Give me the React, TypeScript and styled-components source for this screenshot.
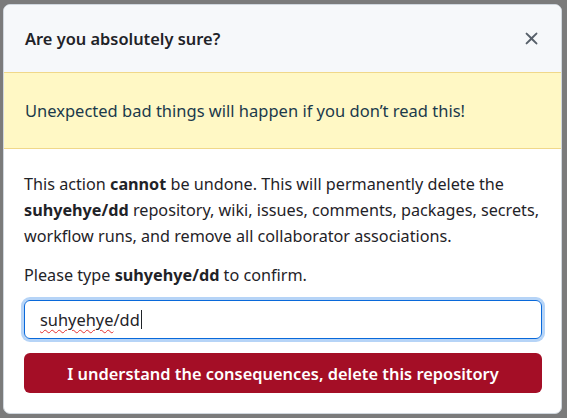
import React from "react";
import styled, { createGlobalStyle } from "styled-components";

const GlobalStyle = createGlobalStyle`
  html, body {
    margin: 0;
    padding: 0;
    background: #7b7b7b;
  }
  body {
    font-family: "Noto Sans", "Open Sans", sans-serif;
    color: #1f2328;
  }
`;

const Backdrop = styled.div`
  width: 567px;
  height: 418px;
  box-sizing: border-box;
  padding: 4px 5px 4px 3px;
  display: flex;
  background: #7b7b7b;
`;

const Dialog = styled.div`
  flex: 1;
  display: flex;
  flex-direction: column;
  background: #fff;
  border: 1px solid #d0d7de;
  border-radius: 7px;
  overflow: hidden;
`;

const Header = styled.div`
  height: 67px;
  display: flex;
  align-items: center;
  justify-content: space-between;
  padding: 0 19px 0 21px;
  background: #f6f8fa;
`;

const Title = styled.h1`
  margin: 0;
  font-size: 16.4px;
  font-weight: 600;
  color: #1f2328;
`;

const CloseButton = styled.button`
  border: 0;
  background: transparent;
  padding: 0;
  display: flex;
  color: #57606a;
  cursor: pointer;
`;

const Flash = styled.div`
  height: 75px;
  display: flex;
  align-items: center;
  padding: 0 21px;
  background: #fff8c5;
  border-top: 1px solid #f0d88a;
  border-bottom: 1px solid #f0d88a;
  font-size: 16.5px;
  color: #1b3a4b;
`;

const Body = styled.div`
  padding: 22px 19px 0 20px;
  display: flex;
  flex-direction: column;
`;

const Para = styled.p<{ $gap?: number }>`
  margin: 0 -8px ${(p) => p.$gap ?? 0}px 0;
  font-size: 16.2px;
  line-height: 26px;
  color: #1f2328;

  b {
    font-weight: 700;
  }
`;

const FakeInput = styled.div`
  height: 39px;
  box-sizing: border-box;
  display: flex;
  align-items: center;
  padding: 0 15px;
  border: 1px solid #0969da;
  border-radius: 6px;
  box-shadow: 0 0 0 3px #b6d4f7;
  font-size: 16.4px;
  color: #1f2328;
  margin: 0 0 14px;
`;

const Misspelled = styled.span`
  text-decoration: underline wavy #e5302f;
  text-decoration-thickness: 1px;
  text-underline-offset: 3px;
`;

const Caret = styled.span`
  display: inline-block;
  width: 1px;
  height: 19px;
  background: #1f2328;
  margin-left: 1px;
`;

const DangerButton = styled.button`
  height: 40px;
  border: 0;
  border-radius: 6px;
  background: #a40e26;
  color: #fff;
  font-family: inherit;
  font-size: 16.4px;
  font-weight: 600;
  cursor: pointer;
`;

const XIcon = () => (
  <svg width="21" height="21" viewBox="0 0 16 16" fill="currentColor">
    <path d="M3.72 3.72a.75.75 0 0 1 1.06 0L8 6.94l3.22-3.22a.75.75 0 1 1 1.06 1.06L9.06 8l3.22 3.22a.75.75 0 1 1-1.06 1.06L8 9.06l-3.22 3.22a.75.75 0 0 1-1.06-1.06L6.94 8 3.72 4.78a.75.75 0 0 1 0-1.06Z" />
  </svg>
);

export default function App() {
  return (
    <>
      <GlobalStyle />
      <Backdrop>
        <Dialog>
          <Header>
            <Title>Are you absolutely sure?</Title>
            <CloseButton aria-label="Close">
              <XIcon />
            </CloseButton>
          </Header>
          <Flash>Unexpected bad things will happen if you don’t read this!</Flash>
          <Body>
            <Para $gap={13}>
              This action <b>cannot</b> be undone. This will permanently delete the{" "}
              <b>suhyehye/dd</b> repository, wiki, issues, comments, packages, secrets,
              workflow runs, and remove all collaborator associations.
            </Para>
            <Para $gap={12}>
              Please type <b>suhyehye/dd</b> to confirm.
            </Para>
            <FakeInput>
              <Misspelled>suhyehye</Misspelled>/dd
              <Caret />
            </FakeInput>
            <DangerButton>I understand the consequences, delete this repository</DangerButton>
          </Body>
        </Dialog>
      </Backdrop>
    </>
  );
}
